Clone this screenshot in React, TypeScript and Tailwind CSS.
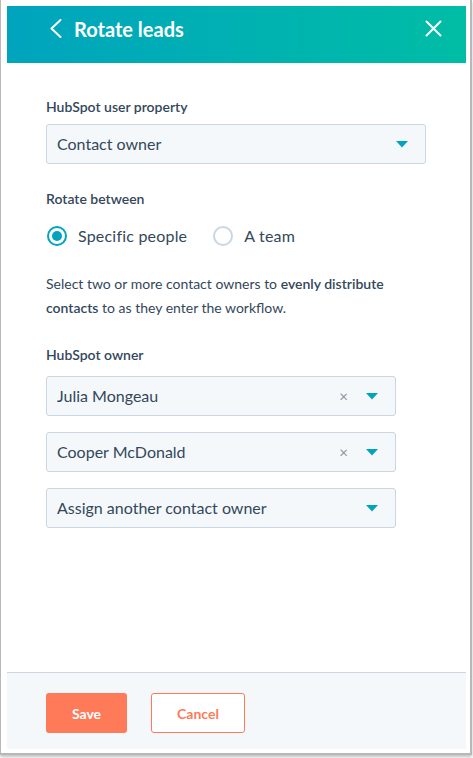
const font = { fontFamily: "Lato, 'Noto Sans', sans-serif" };

function Caret() {
  return (
    <svg width="12" height="7" viewBox="0 0 12 7" className="shrink-0">
      <path d="M0 0h12L6 6.5z" fill="#00a4bd" />
    </svg>
  );
}

function Select({ value, clearable, wide }: { value: string; clearable?: boolean; wide?: boolean }) {
  return (
    <div
      className={`flex items-center h-10 rounded-[3px] border border-[#cbd6e2] bg-[#f5f8fa] pl-[10px] pr-[17px] ${
        wide ? "w-[380px]" : "w-[350px]"
      }`}
    >
      <span className="flex-1 text-[16px] text-[#33475b]">{value}</span>
      {clearable && <span className="text-[15px] text-[#8a96a3] mr-[18px] leading-none">×</span>}
      <Caret />
    </div>
  );
}

function Radio({ label, checked }: { label: string; checked?: boolean }) {
  return (
    <label className="flex items-center gap-[11px]">
      <span
        className={`flex items-center justify-center w-5 h-5 rounded-full border-2 bg-white ${
          checked ? "border-[#00a4bd]" : "border-[#cbd6e2]"
        }`}
      >
        {checked && <span className="w-[10px] h-[10px] rounded-full bg-[#00a4bd]" />}
      </span>
      <span className="text-[16px] text-[#33475b] tracking-[0.2px]">{label}</span>
    </label>
  );
}

export default function App() {
  return (
    <div className="w-[473px] h-[758px] bg-white" style={font}>
      <div className="w-[472px] h-[755px] border-l border-r-2 border-b-2 border-[#b8b8b8] shadow-[0_2px_3px_rgba(0,0,0,0.25)] pt-[6px] pl-[6px] pr-[4px] pb-[4px] flex flex-col">
        {/* header */}
        <header className="h-[57px] flex items-center bg-gradient-to-r from-[#00a4bd] to-[#00bda5] text-white pl-[43px] pr-[24px] pb-[12px]">
          <svg width="12" height="19" viewBox="0 0 12 19" fill="none" className="mr-[12px]">
            <path d="M10.5 1L1.5 9.5l9 8.5" stroke="white" strokeWidth="2" strokeLinecap="round" strokeLinejoin="round" />
          </svg>
          <h1 className="flex-1 text-[20px] font-bold">Rotate leads</h1>
          <svg width="17" height="17" viewBox="0 0 17 17" fill="none">
            <path d="M1.5 1.5l14 14M15.5 1.5l-14 14" stroke="white" strokeWidth="2" strokeLinecap="round" />
          </svg>
        </header>

        <main className="flex-1 pl-[39px] pt-[33px] text-[#33475b]">
          <div className="text-[14px] font-semibold leading-[22px]">HubSpot user property</div>
          <div className="mt-[6px]">
            <Select value="Contact owner" wide />
          </div>

          <div className="mt-[24px] text-[14px] font-semibold leading-[22px]">Rotate between</div>
          <div className="mt-[14px] flex items-center gap-[26px] pl-[1px]">
            <Radio label="Specific people" checked />
            <Radio label="A team" />
          </div>

          <p className="mt-[24px] text-[14px] leading-[24px] w-[360px]">
            Select two or more contact owners to <span className="font-semibold">evenly distribute contacts</span> to as they enter the workflow.
          </p>

          <div className="mt-[24px] text-[14px] font-semibold leading-[22px]">HubSpot owner</div>
          <div className="mt-[10px] flex flex-col gap-[16px]">
            <Select value="Julia Mongeau" clearable />
            <Select value="Cooper McDonald" clearable />
            <Select value="Assign another contact owner" />
          </div>
        </main>

        {/* footer */}
        <footer className="h-[77px] border-t border-[#cbd6e2] bg-[#f5f8fa] flex items-start gap-[24px] pl-[39px] pt-[20px]">
          <button className="w-[81px] h-10 rounded-[3px] bg-[#ff7a59] text-white text-[14px] font-bold">Save</button>
          <button className="w-[94px] h-10 rounded-[3px] border border-[#ff7a59] bg-white text-[#ff7a59] text-[14px] font-bold">
            Cancel
          </button>
        </footer>
      </div>
    </div>
  );
}
